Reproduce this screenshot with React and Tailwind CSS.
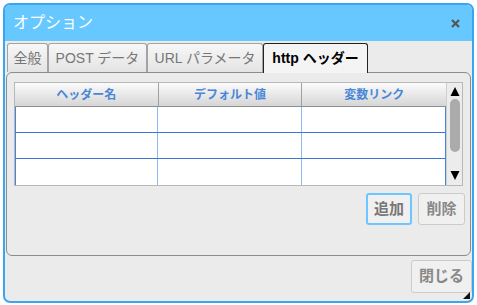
import React from "react";

const jp = { fontFamily: '"Liberation Sans", "Noto Sans CJK JP", sans-serif' };

const tabs = [
  { label: "全般", w: "w-[41px]" },
  { label: "POST データ", w: "w-[99px]" },
  { label: "URL パラメータ", w: "w-[116px]" },
  { label: "http ヘッダー", w: "w-[105px]" },
];
const columns = ["ヘッダー名", "デフォルト値", "変数リンク"];

const Tab = ({ label, w, active }) => {
  if (active) {
    return (
      <div className={`relative z-10 -mb-px flex h-[30px] items-center justify-center rounded-t-[3px] border border-b-0 border-[#222] bg-[#f4f4f4] text-[14px] font-bold text-black ${w}`}>
        {label}
      </div>
    );
  }
  return (
    <div className={`mt-px flex h-[29px] items-center justify-center rounded-t-[3px] border border-b-0 border-[#a3a3a3] bg-gradient-to-b from-[#f7f7f7] to-[#e4e4e4] text-[14px] text-[#777] ${w}`}>
      {label}
    </div>
  );
};

const Scrollbar = () => (
  <div className="flex w-[16px] flex-col items-center border-l border-[#cfcfcf] bg-[#ececec]">
    <svg width="10" height="12" viewBox="0 0 10 12" className="mt-[3px]">
      <path d="M5 1 L9.5 10 L0.5 10 Z" fill="#000" />
    </svg>
    <div className="mt-[1px] h-[53px] w-[10px] rounded-[5px] bg-[#ababab]" />
    <div className="flex-1" />
    <svg width="10" height="12" viewBox="0 0 10 12" className="mb-[4px]">
      <path d="M0.5 2 L9.5 2 L5 11 Z" fill="#000" />
    </svg>
  </div>
);

export default function App() {
  return (
    <div className="h-[305px] w-[477px] bg-white pl-[3px] pt-[3px]" style={jp}>
      <div className="flex h-[300px] w-[471px] flex-col overflow-hidden rounded-[7px] border-2 border-[#3aa6f2] bg-[#ebebeb]">
        <div className="flex h-[36px] shrink-0 items-center justify-between bg-[#66c8ff] pl-[8px] pr-[12px]">
          <span className="text-[16px] text-white">オプション</span>
          <svg width="9" height="9" viewBox="0 0 9 9">
            <path d="M1 1 L8 8 M8 1 L1 8" stroke="#555" strokeWidth="2.2" />
          </svg>
        </div>

        <div className="flex shrink-0 items-end pl-[2px] pt-[1px]">
          {tabs.map((t, i) => (
            <Tab key={t.label} label={t.label} w={t.w} active={i === tabs.length - 1} />
          ))}
        </div>

        <div className="mx-px flex h-[184px] shrink-0 flex-col rounded-[6px] border border-[#8c8c8c] bg-[#ebebeb] px-[7px] pt-[9px]">
          <div className="flex h-[104px] border border-[#b8b8b8] bg-white">
            <div className="flex flex-1 flex-col">
              <div className="grid h-[24px] grid-cols-3 border-b border-[#8e8e8e] bg-gradient-to-b from-[#fbfbfb] to-[#d6d6d6]">
                {columns.map((c, i) => (
                  <div
                    key={c}
                    className={`flex items-center justify-center text-[12px] font-bold text-[#4a86d8] ${i < 2 ? "border-r border-[#a0a0a0]" : ""}`}
                  >
                    {c}
                  </div>
                ))}
              </div>
              {[0, 1, 2].map((r) => (
                <div
                  key={r}
                  className={`grid h-[26px] grid-cols-3 border-r border-[#4a86d8] ${r < 2 ? "border-b border-b-[#3c78cf]" : ""}`}
                >
                  <div className="border-l border-r border-[#4a86d8] border-r-[#8fbcf0]" />
                  <div className="border-r border-[#8fbcf0]" />
                  <div />
                </div>
              ))}
            </div>
            <Scrollbar />
          </div>

          <div className="-mr-[2px] mt-[7px] flex justify-end gap-[6px]">
            <button className="h-[32px] w-[46px] rounded-[3px] border-2 border-[#6cc6ff] bg-[#f0f0f0] text-[15px] font-bold text-[#777]">
              追加
            </button>
            <button className="h-[32px] w-[47px] rounded-[3px] border border-[#cbcbcb] bg-[#f0f0f0] text-[15px] font-bold text-[#888]">
              削除
            </button>
          </div>
        </div>

        <div className="relative flex flex-1 justify-end pr-0 pt-[4px]">
          <button className="h-[33px] w-[61px] rounded-[3px] border border-[#cbcbcb] bg-[#f0f0f0] text-[15px] font-bold text-[#888]">
            閉じる
          </button>
          <svg width="7" height="7" viewBox="0 0 7 7" className="absolute bottom-[2px] right-[2px]">
            <path d="M7 0 L7 7 L0 7 Z" fill="#111" />
          </svg>
        </div>
      </div>
    </div>
  );
}
